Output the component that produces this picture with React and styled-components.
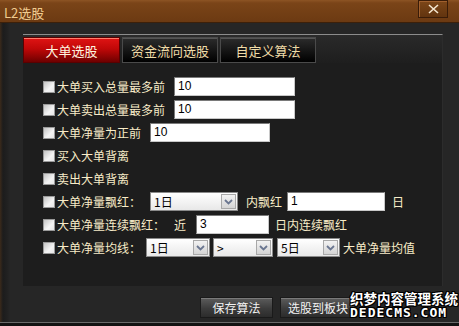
import React from 'react'
import styled, { createGlobalStyle } from 'styled-components'

const Global = createGlobalStyle`
  body {
    margin: 0;
    background: #1a1a1a;
    font-family: "Liberation Sans", "Noto Sans CJK SC", sans-serif;
  }
`

const CN = `"Noto Sans CJK SC", "Liberation Sans", sans-serif`

export const Window = styled.div`
  position: relative;
  width: 459px;
  height: 326px;
  box-sizing: border-box;
  display: flex;
  flex-direction: column;
  background: linear-gradient(90deg, #3b2a1b 0px, #1c1c1c 3px, #222 8px, #262626 10px);
  border-bottom: 3px solid #121212;
  box-shadow: inset 0 -1px 0 #6a6a6a;
  overflow: hidden;
`

export const TitleBar = styled.div`
  height: 23px;
  flex: none;
  display: flex;
  align-items: center;
  justify-content: space-between;
  padding: 0 11px 0 4px;
  background: linear-gradient(#8d5424 0px, #7a4418 3px, #6c3a12 100%);
  border-bottom: 1px solid #3c200a;
  box-sizing: border-box;
`

export const Title = styled.span`
  color: #f0cc90;
  font-size: 13px;
  font-family: ${CN};
  position: relative;
  top: 1px;
`

export const CloseBtn = styled.div`
  width: 30px;
  height: 18px;
  margin-top: -4px;
  box-sizing: border-box;
  display: flex;
  align-items: center;
  justify-content: center;
  border: 1px solid #3a1c08;
  box-shadow: inset 1px 1px 0 #a0602e;
  background: linear-gradient(#7c4618, #62340f);
`

export const Body = styled.div`
  padding: 11px 16px 0 23px;
  flex: none;
`

export const Panel = styled.div`
  width: 420px;
  height: 252px;
  box-sizing: border-box;
  display: flex;
  flex-direction: column;
  background: #1d1d1d;
  border-top: 1px solid #8c8c8c;
  border-right: 1px solid #2c2c2c;
`

export const TabStrip = styled.div`
  display: flex;
  gap: 2px;
  padding-top: 2px;
  height: 28px;
  box-sizing: border-box;
  background: linear-gradient(#2a2a2a, #1e1e1e);
`

export const Tab = styled.div`
  width: ${p => p.w}px;
  height: 26px;
  box-sizing: border-box;
  display: flex;
  align-items: center;
  justify-content: center;
  font-size: 13px;
  font-family: ${CN};
  color: ${p => (p.active ? '#fff6e0' : '#f0dca8')};
  background: ${p =>
    p.active
      ? 'linear-gradient(#e01414 0%, #c00808 45%, #6e0000 100%)'
      : 'linear-gradient(#2c2c2c 0%, #141414 55%, #000 100%)'};
  border: 1px solid ${p => (p.active ? '#5a0000' : '#4a4a4a')};
  box-shadow: ${p => (p.active ? 'inset 0 1px 0 #ff7a6a' : 'inset 0 1px 0 #555')};
`

export const Content = styled.div`
  padding: 12px 0 0 20px;
  display: flex;
  flex-direction: column;
`

export const Row = styled.div`
  height: 23px;
  display: flex;
  align-items: center;
  font-size: 12px;
  font-family: ${CN};
  color: #f8ecc8;
  white-space: nowrap;
`

export const Check = styled.span`
  width: 12px;
  height: 12px;
  margin-right: 2px;
  box-sizing: border-box;
  background: linear-gradient(135deg, #c4c4c4, #f4f4f4 60%, #e6e6e6);
  border: 1px solid #9a9a9a;
  flex: none;
`

export const Label = styled.span`
  margin-left: ${p => p.ml || 0}px;
`

export const Input = styled.div`
  width: ${p => p.w}px;
  height: 19px;
  margin-left: ${p => p.ml}px;
  box-sizing: border-box;
  background: #fff;
  border: 1px solid #7a7a7a;
  border-right-color: #c8c8c8;
  border-bottom-color: #c8c8c8;
  color: #000;
  font-size: 12px;
  font-family: "Liberation Sans", sans-serif;
  line-height: 17px;
  padding-left: 3px;
`

export const Select = styled.div`
  width: ${p => p.w}px;
  height: 19px;
  margin-left: ${p => p.ml}px;
  box-sizing: border-box;
  display: flex;
  align-items: center;
  justify-content: space-between;
  background: linear-gradient(#ffffff, #e8e8e8);
  border: 1px solid #8a8a8a;
  color: #000;
  font-size: 12px;
  font-family: ${CN};
  padding-left: 3px;
`

export const Arrow = styled.span`
  width: 15px;
  height: 15px;
  margin-right: 1px;
  box-sizing: border-box;
  display: flex;
  align-items: center;
  justify-content: center;
  border: 1px solid #a8a8a8;
  background: linear-gradient(#f2f2f2, #d4d4d4);
`

export const Footer = styled.div`
  display: flex;
  gap: 7px;
  padding: 11px 0 0 200px;
`

export const Button = styled.div`
  width: ${p => p.w}px;
  height: 21px;
  box-sizing: border-box;
  display: flex;
  align-items: center;
  justify-content: center;
  font-size: 12px;
  font-family: ${CN};
  color: #f2f2f2;
  background: linear-gradient(#5c5c5c, #3c3c3c 55%, #2c2c2c);
  border: 1px solid #1a1a1a;
  box-shadow: inset 0 1px 0 #7a7a7a;
`

export const Watermark = styled.div`
  position: absolute;
  right: 1px;
  bottom: 4px;
  display: flex;
  flex-direction: column;
  align-items: flex-start;
  gap: 1px;
  color: #fff;
  font-weight: bold;
  line-height: 14px;
  text-shadow: 1px 0 0 #000, -1px 0 0 #000, 0 1px 0 #000, 0 -1px 0 #000,
    1px 1px 0 #000, -1px -1px 0 #000, 1px -1px 0 #000, -1px 1px 0 #000;
`

export const WmTop = styled.span`
  font-family: ${CN};
  font-size: 13.5px;
  height: 14px;
`

export const WmBottom = styled.span`
  font-family: "DejaVu Sans Mono", monospace;
  font-size: 13px;
  height: 13px;
  line-height: 13px;
  letter-spacing: 1px;
`

const Chevron = () => (
  <svg width="9" height="6" viewBox="0 0 9 6">
    <path d="M1 1 L4.5 4.5 L8 1" fill="none" stroke="#6a7690" strokeWidth="1.8" />
  </svg>
)

const Drop = ({ w, ml, children }) => (
  <Select w={w} ml={ml}>
    <span>{children}</span>
    <Arrow>
      <Chevron />
    </Arrow>
  </Select>
)

export default function App() {
  return (
    <>
      <Global />
      <Window>
        <TitleBar>
          <Title>L2选股</Title>
          <CloseBtn>
            <svg width="11" height="10" viewBox="0 0 11 10">
              <path d="M1 1 L10 9 M10 1 L1 9" stroke="#f4e6d0" strokeWidth="1.6" />
            </svg>
          </CloseBtn>
        </TitleBar>
        <Body>
          <Panel>
            <TabStrip>
              <Tab w={97} active>大单选股</Tab>
              <Tab w={96}>资金流向选股</Tab>
              <Tab w={96}>自定义算法</Tab>
            </TabStrip>
            <Content>
              <Row>
                <Check />
                <Label>大单买入总量最多前</Label>
                <Input w={121} ml={9}>10</Input>
              </Row>
              <Row>
                <Check />
                <Label>大单卖出总量最多前</Label>
                <Input w={121} ml={9}>10</Input>
              </Row>
              <Row>
                <Check />
                <Label>大单净量为正前</Label>
                <Input w={120} ml={9}>10</Input>
              </Row>
              <Row>
                <Check />
                <Label>买入大单背离</Label>
              </Row>
              <Row>
                <Check />
                <Label>卖出大单背离</Label>
              </Row>
              <Row>
                <Check />
                <Label>大单净量飘红：</Label>
                <Drop w={88} ml={9}>1日</Drop>
                <Label ml={8}>内飘红</Label>
                <Input w={98} ml={5}>1</Input>
                <Label ml={7}>日</Label>
              </Row>
              <Row>
                <Check />
                <Label>大单净量连续飘红：</Label>
                <Label ml={9}>近</Label>
                <Input w={73} ml={10}>3</Input>
                <Label ml={6}>日内连续飘红</Label>
              </Row>
              <Row>
                <Check />
                <Label>大单净量均线：</Label>
                <Drop w={64} ml={5}>1日</Drop>
                <Drop w={60} ml={3}>&gt;</Drop>
                <Drop w={63} ml={4}>5日</Drop>
                <Label ml={3}>大单净量均值</Label>
              </Row>
            </Content>
          </Panel>
        </Body>
        <Footer>
          <Button w={73}>保存算法</Button>
          <Button w={76}>选股到板块</Button>
        </Footer>
        <Watermark>
          <WmTop>织梦内容管理系统</WmTop>
          <WmBottom>DEDECMS.COM</WmBottom>
        </Watermark>
      </Window>
    </>
  )
}
